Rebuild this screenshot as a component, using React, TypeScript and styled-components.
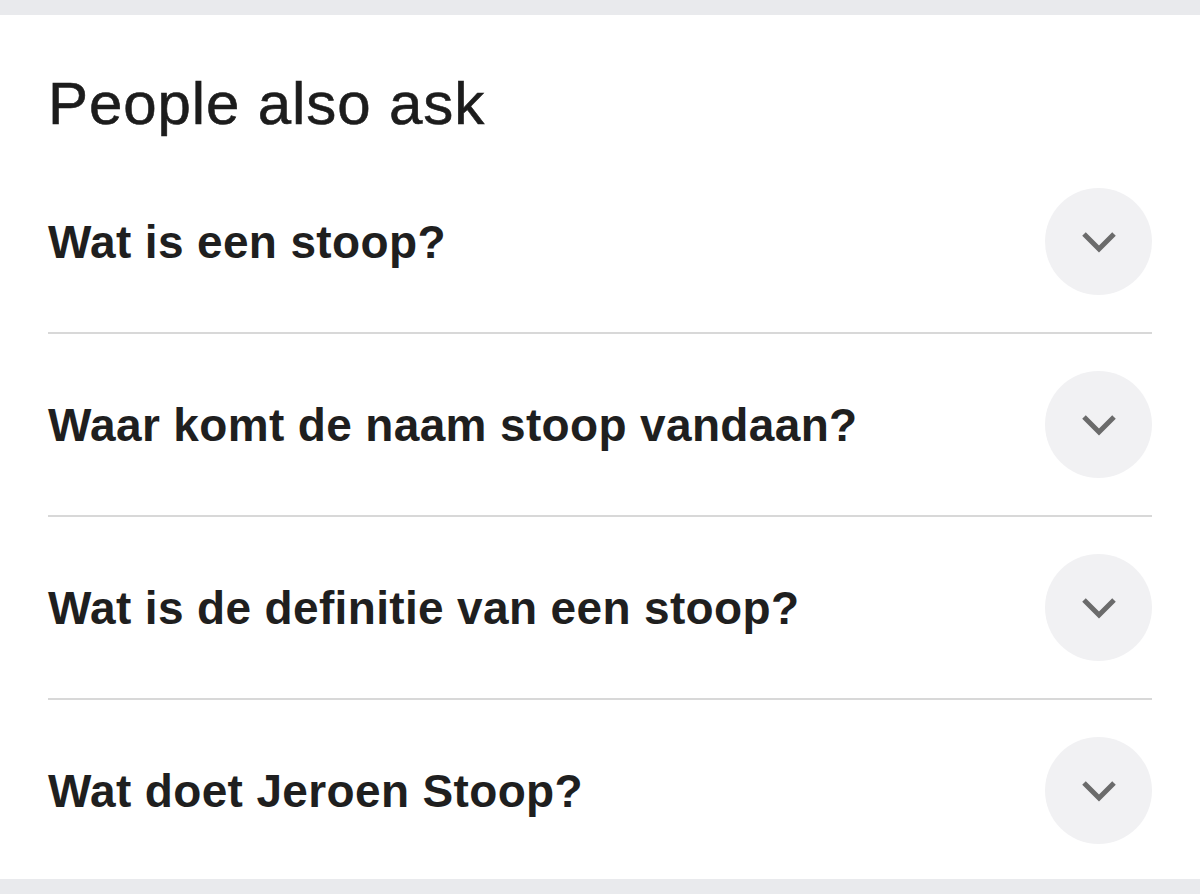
import React from "react";
import styled, { createGlobalStyle } from "styled-components";

const GlobalStyle = createGlobalStyle`
  html, body {
    margin: 0;
    padding: 0;
    background: #e9eaed;
  }
  body {
    font-family: "Liberation Sans", Arial, Helvetica, sans-serif;
    -webkit-font-smoothing: antialiased;
  }
`;

const Page = styled.div`
  width: 1200px;
  height: 894px;
  padding: 15px 0;
  box-sizing: border-box;
  background: #e9eaed;
`;

const Card = styled.section`
  height: 864px;
  background: #ffffff;
  padding: 53px 48px 0;
  box-sizing: border-box;
  display: flex;
  flex-direction: column;
`;

const Title = styled.h2`
  margin: 0 0 11px;
  font-size: 60px;
  line-height: 72px;
  font-weight: 400;
  color: #1c1c1c;
  letter-spacing: 0.9px;
  -webkit-text-stroke: 0.6px #1c1c1c;
`;

const List = styled.div`
  display: flex;
  flex-direction: column;
`;

const Row = styled.div<{ $first?: boolean }>`
  display: flex;
  align-items: center;
  justify-content: space-between;
  height: 181px;
  border-top: ${(p) => (p.$first ? "none" : "2px solid #d8d8d8")};
`;

const Question = styled.span`
  font-size: 46px;
  font-weight: 700;
  color: #1f1f1f;
  letter-spacing: 0.35px;
`;

const Toggle = styled.button`
  width: 107px;
  height: 107px;
  border-radius: 50%;
  border: none;
  padding: 0;
  background: #f1f1f3;
  display: flex;
  align-items: center;
  justify-content: center;
  cursor: pointer;
`;

const Chevron = () => (
  <svg width="36" height="22" viewBox="0 0 36 22">
    <polyline
      points="3,3 18,18 33,3"
      fill="none"
      stroke="#6b6b6b"
      strokeWidth="5"
      strokeLinejoin="miter"
    />
  </svg>
);

const questions = [
  "Wat is een stoop?",
  "Waar komt de naam stoop vandaan?",
  "Wat is de definitie van een stoop?",
  "Wat doet Jeroen Stoop?",
];

export default function App() {
  return (
    <>
      <GlobalStyle />
      <Page>
        <Card>
          <Title>People also ask</Title>
          <List>
            {questions.map((q, i) => (
              <Row key={q} $first={i === 0}>
                <Question>{q}</Question>
                <Toggle aria-label="Uitvouwen">
                  <Chevron />
                </Toggle>
              </Row>
            ))}
          </List>
        </Card>
      </Page>
    </>
  );
}
